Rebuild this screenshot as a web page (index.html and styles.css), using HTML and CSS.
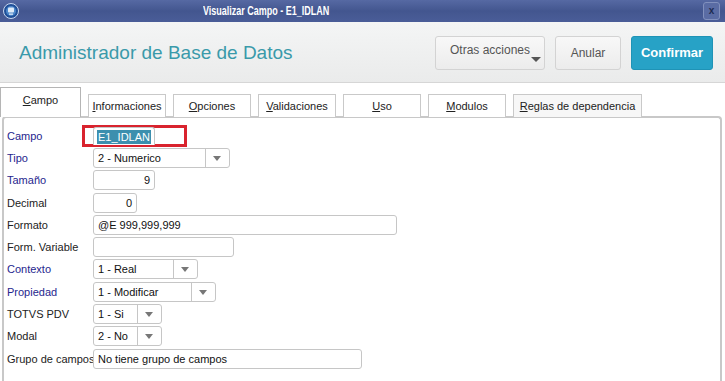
FILE: index.html
```html
<!DOCTYPE html>
<html lang="es">
<head>
    <meta charset="UTF-8">
    <title>Visualizar Campo - E1_IDLAN</title>
    <link rel="stylesheet" href="styles.css">
</head>
<body>
    <div class="window">
        <div class="titlebar">
            <div class="app-icon">
                <svg width="16" height="16" viewBox="0 0 16 16">
                    <circle cx="8" cy="8" r="7.5" fill="#1f4f98" stroke="#c8d6ee" stroke-width="1"/>
                    <circle cx="8" cy="8" r="5" fill="#4b86c9"/>
                    <rect x="5" y="4.5" width="6" height="5" rx="1" fill="#dfeaf7"/>
                    <rect x="6" y="10.5" width="4" height="1.3" fill="#dfeaf7"/>
                </svg>
            </div>
            <div class="title-text">Visualizar Campo - E1_IDLAN</div>
            <div class="close-btn">x</div>
        </div>

        <div class="header">
            <h1 class="app-title">Administrador de Base de Datos</h1>
            <div class="actions">
                <button class="btn btn-more">Otras acciones<span class="caret"></span></button>
                <button class="btn btn-cancel">Anular</button>
                <button class="btn btn-confirm">Confirmar</button>
            </div>
        </div>

        <div class="tabs">
            <div class="tab active"><u>C</u>ampo</div>
            <div class="tab"><u>I</u>nformaciones</div>
            <div class="tab"><u>O</u>pciones</div>
            <div class="tab"><u>V</u>alidaciones</div>
            <div class="tab"><u>U</u>so</div>
            <div class="tab"><u>M</u>odulos</div>
            <div class="tab tab-wide"><u>R</u>eglas de dependencia</div>
        </div>

        <div class="panel">
            <div class="form">
                <div class="row">
                    <label class="req">Campo</label>
                    <div class="focus-box">
                        <div class="field w-62"><span class="selected">E1_IDLAN</span></div>
                    </div>
                </div>
                <div class="row">
                    <label class="req">Tipo</label>
                    <div class="field select w-137"><span class="val">2 - Numerico</span><span class="arrow"></span></div>
                </div>
                <div class="row">
                    <label class="req">Tamaño</label>
                    <div class="field num w-62">9</div>
                </div>
                <div class="row">
                    <label>Decimal</label>
                    <div class="field num w-44">0</div>
                </div>
                <div class="row">
                    <label>Formato</label>
                    <div class="field w-304">@E 999,999,999</div>
                </div>
                <div class="row">
                    <label>Form. Variable</label>
                    <div class="field w-141"></div>
                </div>
                <div class="row">
                    <label class="req">Contexto</label>
                    <div class="field select w-105"><span class="val">1 - Real</span><span class="arrow"></span></div>
                </div>
                <div class="row">
                    <label class="req">Propiedad</label>
                    <div class="field select w-123"><span class="val">1 - Modificar</span><span class="arrow"></span></div>
                </div>
                <div class="row">
                    <label>TOTVS PDV</label>
                    <div class="field select w-69"><span class="val">1 - Si</span><span class="arrow"></span></div>
                </div>
                <div class="row">
                    <label>Modal</label>
                    <div class="field select w-69"><span class="val">2 - No</span><span class="arrow"></span></div>
                </div>
                <div class="row">
                    <label>Grupo de campos</label>
                    <div class="field w-269">No tiene grupo de campos</div>
                </div>
            </div>
        </div>
    </div>
</body>
</html>
```

FILE: styles.css
```css
* {
    margin: 0;
    padding: 0;
    box-sizing: border-box;
}

body {
    font-family: 'Liberation Sans', Arial, sans-serif;
    font-size: 12px;
    color: #222;
    background: #fff;
    width: 725px;
    height: 381px;
    overflow: hidden;
}

.window {
    display: flex;
    flex-direction: column;
    height: 381px;
}

/* barra de titulo */
.titlebar {
    height: 22px;
    background: linear-gradient(180deg, #5669a3 0%, #43568f 50%, #4a5d98 100%);
    display: flex;
    align-items: center;
    padding: 0 3px 0 3px;
}

.app-icon {
    width: 16px;
    height: 16px;
    display: flex;
}

.title-text {
    flex: 1;
    padding-left: 184px;
    color: #fff;
    font-size: 12.5px;
    font-weight: bold;
    white-space: nowrap;
    transform: scaleX(0.72);
    transform-origin: 184px 50%;
}

.close-btn {
    width: 17px;
    height: 18px;
    border: 1px solid #8190bd;
    border-radius: 3px;
    background: #5a6ca4;
    color: #1d2a52;
    font-size: 10px;
    font-weight: bold;
    text-align: center;
    line-height: 15px;
    margin-right: 2px;
}

/* cabecera */
.header {
    height: 61px;
    background: linear-gradient(180deg, #f4f5f5 0%, #eaebeb 100%);
    border-bottom: 1px solid #d6d6d6;
    display: flex;
    align-items: center;
    justify-content: space-between;
    padding: 0 12px 0 19px;
}

.app-title {
    font-size: 19px;
    font-weight: normal;
    color: #3a9aaa;
    margin-top: 2px;
}

.actions {
    display: flex;
    gap: 10px;
    margin-top: 1px;
}

.btn {
    height: 34px;
    border: 1px solid #d3d3d3;
    border-radius: 3px;
    background: linear-gradient(180deg, #f8f8f8 0%, #ececec 100%);
    font-family: 'Liberation Sans', Arial, sans-serif;
    font-size: 12px;
    color: #555;
    position: relative;
}

.btn-more {
    width: 110px;
    padding: 0 0 6px 0;
}

.caret {
    position: absolute;
    right: 3px;
    bottom: 7px;
    width: 0;
    height: 0;
    border-left: 5px solid transparent;
    border-right: 5px solid transparent;
    border-top: 5px solid #555;
}

.btn-cancel {
    width: 66px;
}

.btn-confirm {
    width: 82px;
    background: #27a2c6;
    border-color: #1f93b6;
    color: #fff;
    font-weight: bold;
    font-size: 13px;
}

/* pestanas */
.tabs {
    display: flex;
    align-items: flex-end;
    gap: 7px;
    height: 34px;
    margin-bottom: -1px;
    position: relative;
    z-index: 1;
}

.tab {
    width: 78px;
    height: 23px;
    border: 1px solid #c9c9c9;
    border-bottom: none;
    background: #fff;
    text-align: center;
    font-size: 11px;
    line-height: 22px;
    color: #222;
}

.tab.active {
    width: 81px;
    height: 30px;
    line-height: 24px;
    border-color: #b5b5b5;
}

.tab-wide {
    width: 129px;
    background: #f7f7f7;
}

/* panel */
.panel {
    flex: 1;
    margin: 0 3px 0 2px;
    border: 2px solid #c8c8c8;
    border-bottom: none;
    border-radius: 4px 4px 0 0;
    padding: 8px 0 0 3px;
    background: #fff;
}

.form {
    display: flex;
    flex-direction: column;
    gap: 3px;
}

.row {
    display: flex;
    align-items: center;
    height: 19.3px;
}

.row label {
    width: 86px;
    font-size: 11px;
    color: #222;
    white-space: nowrap;
}

.row label.req {
    color: #26268e;
}

.field {
    height: 20px;
    border: 1px solid #c6c6c6;
    border-radius: 3px;
    background: #fff;
    font-size: 11px;
    line-height: 18px;
    padding: 0 4px;
    color: #111;
    display: flex;
    align-items: center;
}

.field.num {
    justify-content: flex-end;
}

.focus-box {
    margin-left: -11px;
    padding: 1px 29px 0 8px;
    border: 3px solid #d9232e;
    height: 22px;
    display: flex;
    align-items: center;
}

.focus-box .field {
    height: 18px;
    border-bottom: none;
    border-radius: 3px 3px 0 0;
    padding: 0 3px;
}

.selected {
    background: #3c8fae;
    color: #fff;
    padding: 0 1px;
    line-height: 14px;
}

.select {
    padding: 0;
}

.select .val {
    flex: 1;
    padding-left: 4px;
    border-right: 1px solid #c6c6c6;
    height: 100%;
}

.select .arrow {
    width: 23px;
    height: 100%;
    position: relative;
}

.select .arrow::after {
    content: "";
    position: absolute;
    left: 7px;
    top: 7px;
    border-left: 4px solid transparent;
    border-right: 4px solid transparent;
    border-top: 5px solid #777;
}

.w-44 { width: 44px; }
.w-62 { width: 62px; }
.w-69 { width: 69px; }
.w-105 { width: 105px; }
.w-123 { width: 123px; }
.w-137 { width: 137px; }
.w-141 { width: 141px; }
.w-269 { width: 269px; }
.w-304 { width: 304px; }
```
